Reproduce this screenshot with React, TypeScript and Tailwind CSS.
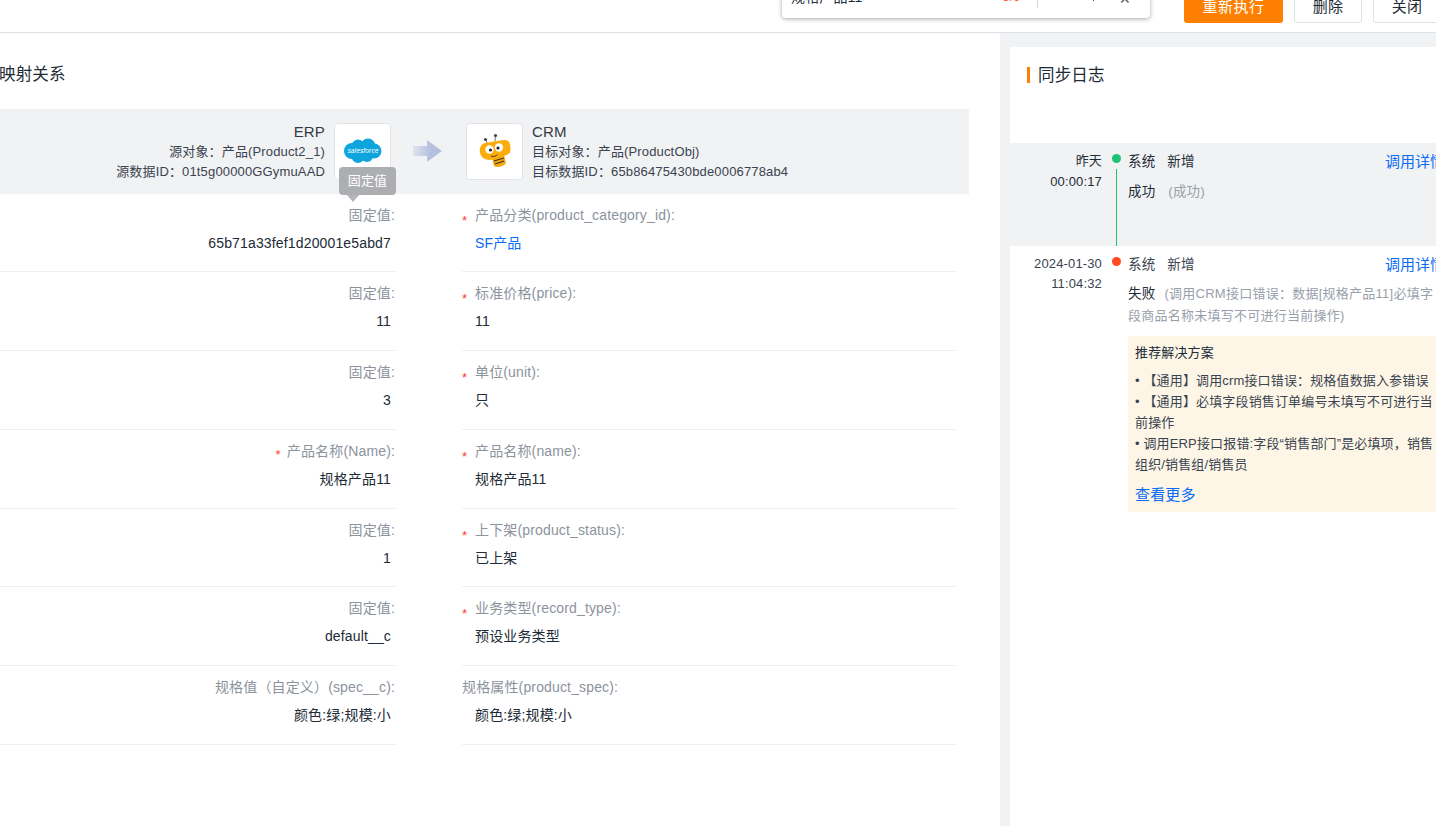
const rows = [
  { left: "固定值:", leftReq: false, value: "65b71a33fef1d20001e5abd7", right: "产品分类(product_category_id):", rightReq: true, target: "SF产品", link: true },
  { left: "固定值:", leftReq: false, value: "11", right: "标准价格(price):", rightReq: true, target: "11" },
  { left: "固定值:", leftReq: false, value: "3", right: "单位(unit):", rightReq: true, target: "只" },
  { left: "产品名称(Name):", leftReq: true, value: "规格产品11", right: "产品名称(name):", rightReq: true, target: "规格产品11" },
  { left: "固定值:", leftReq: false, value: "1", right: "上下架(product_status):", rightReq: true, target: "已上架" },
  { left: "固定值:", leftReq: false, value: "default__c", right: "业务类型(record_type):", rightReq: true, target: "预设业务类型" },
  { left: "规格值（自定义）(spec__c):", leftReq: false, value: "颜色:绿;规模:小", right: "规格属性(product_spec):", rightReq: false, target: "颜色:绿;规模:小" },
];

function SalesforceLogo() {
  return (
    <svg width="40" height="28" viewBox="0 0 40 28">
      <g fill="#0ea5dc">
        <circle cx="9" cy="14" r="8" />
        <circle cx="15" cy="9" r="6.500" />
        <circle cx="25" cy="9" r="7.500" />
        <circle cx="31" cy="14" r="7.500" />
        <circle cx="24" cy="19" r="6" />
        <circle cx="15" cy="19.500" r="6.500" />
      </g>
      <text x="20" y="16" textAnchor="middle" fontSize="6.500" fill="#fff" fontStyle="italic" fontFamily="Liberation Sans, sans-serif">
        salesforce
      </text>
    </svg>
  );
}

function BeeLogo() {
  return (
    <svg width="34" height="36" viewBox="0 0 34 36">
      <path d="M7.500 6.500l2 4M17.500 2.500l-.5 6" stroke="#555" strokeWidth="0.800" />
      <circle cx="7.500" cy="6.500" r="1.600" fill="#444" />
      <circle cx="17.500" cy="2.500" r="1.600" fill="#444" />
      <path d="M14 25l12-3 2 8c-2 3.500-9 5-12 3z" fill="#f5a70a" />
      <path d="M16 28l10-3M17 31l9-3" stroke="#333" strokeWidth="1.100" />
      <path d="M7 10l18-3c4-.5 6 1 7 4l.5 5c.3 3-1.500 5-4 6l-14 4.500c-5 1.500-11-1-12.500-6.500C1 15 3 11 7 10z" fill="#fcab0c" />
      <circle cx="11.500" cy="16.500" r="4.200" fill="#fff" />
      <circle cx="21" cy="14.500" r="4.200" fill="#fff" />
      <circle cx="12.500" cy="17" r="1.600" fill="#222" />
      <circle cx="20" cy="15" r="1.600" fill="#222" />
      <path d="M13 23c2 1 5 .5 6.500-1.500" stroke="#333" strokeWidth="0.900" fill="none" />
    </svg>
  );
}

function Arrow() {
  return (
    <svg width="30" height="22" viewBox="0 0 30 22">
      <defs>
        <linearGradient id="arr" x1="0" x2="1" y1="0" y2="0">
          <stop offset="0" stopColor="#dfe4ee" />
          <stop offset="0.600" stopColor="#b4c0de" />
        </linearGradient>
      </defs>
      <path d="M0 6h14V0l15 11-15 11v-6H0z" fill="url(#arr)" />
    </svg>
  );
}

function Star() {
  return <span className="text-[#ff3b1f] text-[13px] leading-none relative top-[3px]">*</span>;
}

export default function App() {
  return (
    <div
      className="w-[1436px] h-[826px] overflow-hidden bg-white flex flex-col text-[14px] tracking-[0.15px] text-[#212b36]"
      style={{ fontFamily: '"Liberation Sans", "Noto Sans CJK SC", sans-serif' }}
    >
      <div className="h-[33px] shrink-0 border-b border-[#dee1e8] flex justify-end items-end relative">
        <div className="absolute left-[782px] -top-[10px] w-[368px] h-[28px] bg-white rounded-[4px] shadow-[0_1px_4px_rgba(0,0,0,0.35)] flex items-start px-[9px]">
          <span className="leading-[20px] mt-[-3px]">规格产品11</span>
          <span className="ml-auto text-[#ff5a1f] text-[12px] leading-[20px] mt-[-3px]">3/6</span>
          <span className="ml-[17px] w-px h-[18px] bg-[#d4d6da]" />
          <span className="ml-[55px] w-px h-[11px] bg-[#555]" />
          <span className="ml-[25px] w-[22px] text-[14px] leading-[20px] mt-[-1px] text-[#555]">✕</span>
        </div>
        <div className="flex gap-[11px] mb-[9px] -mr-[5px]">
          <button className="w-[99px] h-[32px] bg-[#ff8000] text-white text-[15px] tracking-[0.5px] rounded-[3px]">重新执行</button>
          <button className="w-[68px] h-[32px] bg-white border border-[#dee1e8] text-[15px] rounded-[3px]">删除</button>
          <button className="w-[68px] h-[32px] bg-white border border-[#dee1e8] text-[15px] rounded-[3px]">关闭</button>
        </div>
      </div>

      <div className="flex-1 flex min-h-0">
        <div className="w-[1000px] shrink-0 bg-white">
          <div className="h-[76px] pt-[30px] text-[16.5px] leading-[22px] -ml-px">映射关系</div>

          <div className="w-[969px] h-[84.5px] bg-[#f1f2f4] flex relative">
            <div className="w-[391px] shrink-0 flex justify-end items-center gap-[9px]">
              <div className="text-right text-[13px] leading-[20px] text-[#3a4350] pt-[1px]">
                <div className="text-[15px] text-[#333a45]">ERP</div>
                <div>源对象：产品(Product2_1)</div>
                <div>源数据ID：01t5g00000GGymuAAD</div>
              </div>
              <div className="w-[57px] h-[57px] bg-white border border-[#e1e4e9] rounded-[4px] flex items-center justify-center">
                <SalesforceLogo />
              </div>
            </div>
            <div className="w-[75px] shrink-0 flex items-center justify-center pr-[1px]">
              <Arrow />
            </div>
            <div className="flex items-center gap-[9px]">
              <div className="w-[57px] h-[57px] bg-white border border-[#e1e4e9] rounded-[4px] flex items-center justify-center">
                <BeeLogo />
              </div>
              <div className="text-[13px] leading-[20px] text-[#3a4350] pt-[1px]">
                <div className="text-[15px] text-[#333a45]">CRM</div>
                <div>目标对象：产品(ProductObj)</div>
                <div>目标数据ID：65b86475430bde0006778ab4</div>
              </div>
            </div>
            <div className="absolute left-[339px] top-[58px] w-[57px] h-[28px] bg-[#adaeb1] rounded-[4px] text-white text-[13px] leading-[28px] text-center">
              固定值
              <span className="absolute left-[8px] top-[28px] w-0 h-0 border-x-[6px] border-x-transparent border-t-[7px] border-t-[#b4b5b8]" />
            </div>
          </div>

          {rows.map((r, i) => (
            <div key={i} className="flex h-[78.8px]">
              <div className="w-[396px] shrink-0 border-b border-[#eef0f3] pr-[1px] text-right pt-[11px]">
                <div className="leading-[20px] text-[#8c939d]">
                  {r.leftReq && <span className="mr-[6px]"><Star /></span>}
                  {r.left}
                </div>
                <div className="mt-[8px] pr-[4px] leading-[20px]">{r.value}</div>
              </div>
              <div className="w-[66px] shrink-0" />
              <div className="w-[495px] shrink-0 border-b border-[#eef0f3] pt-[11px] relative">
                <div className="leading-[20px] text-[#8c939d] pl-[13px] relative">
                  {r.rightReq && <span className="absolute left-0 top-[2px]"><Star /></span>}
                  {r.rightReq ? r.right : <span className="-ml-[13px]">{r.right}</span>}
                </div>
                <div className={"mt-[8px] leading-[20px] pl-[13px] " + (r.link ? "text-[#0a6cf5]" : "")}>{r.target}</div>
              </div>
            </div>
          ))}
        </div>

        <div className="flex-1 bg-[#f1f2f4] pt-[14px] pl-[10px] min-w-0">
          <div className="bg-white h-full">
            <div className="h-[96px] pt-[18px] pl-[17px]">
              <div className="flex items-center gap-[8px] h-[20px]">
                <span className="w-[3px] h-[16px] bg-[#ff8000]" />
                <span className="text-[16.5px]">同步日志</span>
              </div>
            </div>

            <div className="bg-[#f1f2f4] h-[103px] flex relative">
              <div className="w-[92px] shrink-0 text-right pt-[7px] leading-[21px] text-[13px]">
                <div>昨天</div>
                <div>00:00:17</div>
              </div>
              <div className="w-[26px] shrink-0 relative">
                <span className="absolute left-[10px] top-[11px] w-[9px] h-[9px] rounded-full bg-[#1fc173]" />
                <span className="absolute left-[14px] top-[26px] bottom-0 w-px bg-[#1fc173]" />
              </div>
              <div className="flex-1 pt-[9px] min-w-0 text-[13.5px]">
                <div className="flex justify-between leading-[20px]">
                  <div className="flex gap-[12px]"><span>系统</span><span>新增</span></div>
                  <span className="text-[#0a6cf5] text-[15px] tracking-normal whitespace-nowrap w-[51px] overflow-hidden">调用详情</span>
                </div>
                <div className="flex gap-[13px] mt-[10px] leading-[20px]">
                  <span>成功</span><span className="text-[#98a0aa]">(成功)</span>
                </div>
              </div>
            </div>

            <div className="flex">
              <div className="w-[92px] shrink-0 text-right pt-[8px] leading-[20px] text-[#3a4350] text-[13px]">
                <div>2024-01-30</div>
                <div>11:04:32</div>
              </div>
              <div className="w-[26px] shrink-0 relative">
                <span className="absolute left-[10px] top-[11px] w-[9px] h-[9px] rounded-full bg-[#ff4a1f]" />
              </div>
              <div className="flex-1 pt-[9px] min-w-0 text-[13.5px]">
                <div className="flex justify-between leading-[20px]">
                  <div className="flex gap-[12px] text-[#3a4350]"><span>系统</span><span>新增</span></div>
                  <span className="text-[#0a6cf5] text-[15px] tracking-normal whitespace-nowrap w-[51px] overflow-hidden">调用详情</span>
                </div>
                <div className="mt-[8px] w-[310px] leading-[22px] text-[13px] tracking-[0.25px] text-[#98a0aa]">
                  <span className="text-[#212b36] text-[13.5px] mr-[9px]">失败</span>(调用CRM接口错误：数据[规格产品11]必填字段商品名称未填写不可进行当前操作)
                </div>
                <div className="mt-[9px] bg-[#fdf6e6] h-[176px] px-[7px] pt-[7px] text-[13px] text-[#3a4350]">
                  <div className="leading-[20px] text-[#212b36]">推荐解决方案</div>
                  <div className="mt-[7px] w-[302px] leading-[21px]">
                    <div>• 【通用】调用crm接口错误：规格值数据入参错误</div>
                    <div>• 【通用】必填字段销售订单编号未填写不可进行当前操作</div>
                    <div>• 调用ERP接口报错:字段“销售部门”是必填项，销售组织/销售组/销售员</div>
                  </div>
                  <div className="mt-[10px] text-[#0a6cf5] text-[15px] leading-[20px]">查看更多</div>
                </div>
              </div>
            </div>
          </div>
        </div>
      </div>
    </div>
  );
}
